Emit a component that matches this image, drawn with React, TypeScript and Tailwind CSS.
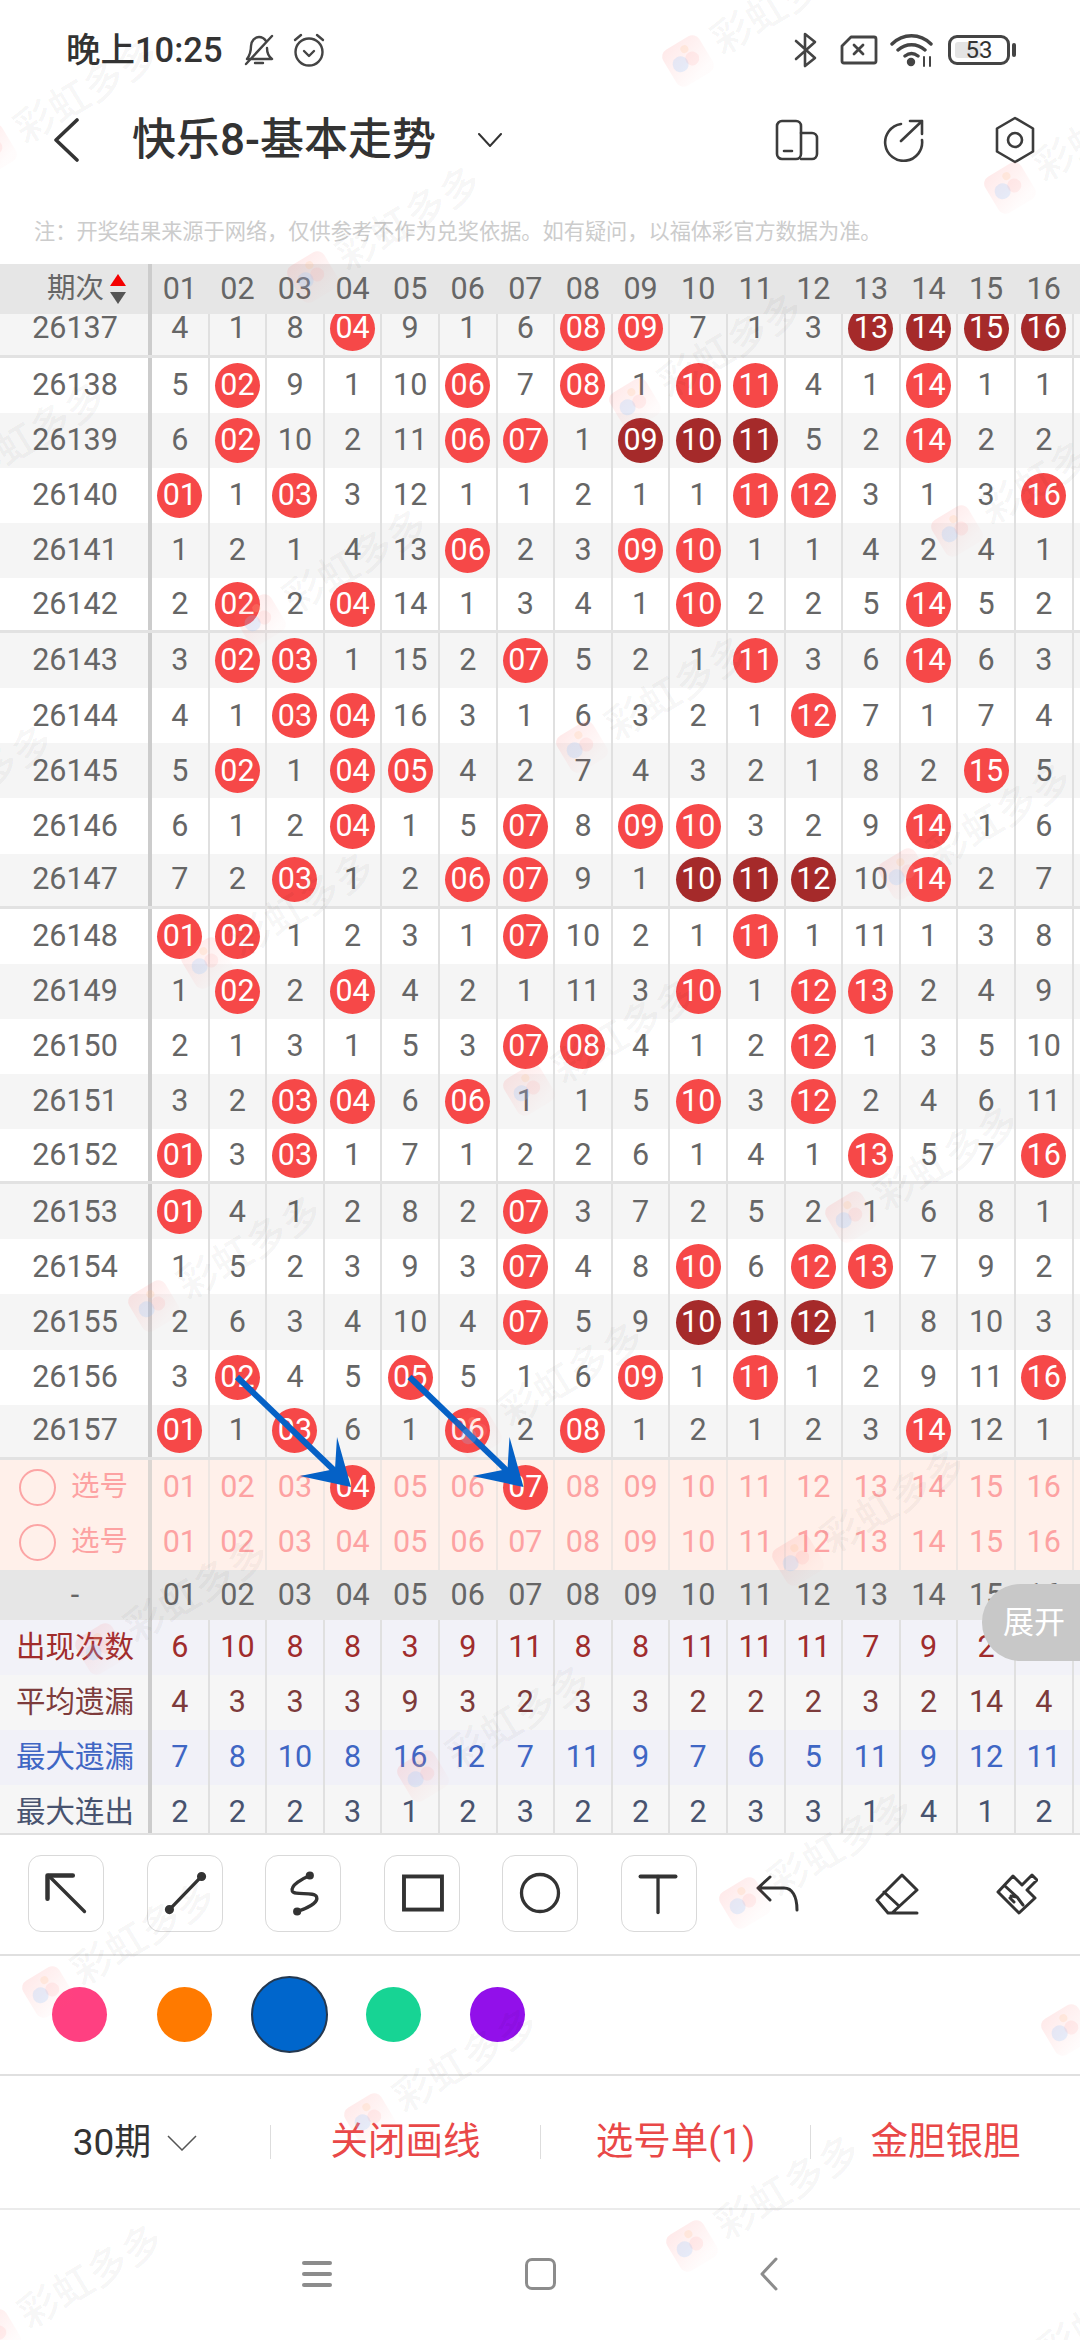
const ROWS: [string, string][] = [
  ["26137", "4 1 8 r04 9 1 6 r08 r09 7 1 3 d13 d14 d15 d16"],
  ["26138", "5 r02 9 1 10 r06 7 r08 1 r10 r11 4 1 r14 1 1"],
  ["26139", "6 r02 10 2 11 r06 r07 1 d09 d10 d11 5 2 r14 2 2"],
  ["26140", "r01 1 r03 3 12 1 1 2 1 1 r11 r12 3 1 3 r16"],
  ["26141", "1 2 1 4 13 r06 2 3 r09 r10 1 1 4 2 4 1"],
  ["26142", "2 r02 2 r04 14 1 3 4 1 r10 2 2 5 r14 5 2"],
  ["26143", "3 r02 r03 1 15 2 r07 5 2 1 r11 3 6 r14 6 3"],
  ["26144", "4 1 r03 r04 16 3 1 6 3 2 1 r12 7 1 7 4"],
  ["26145", "5 r02 1 r04 r05 4 2 7 4 3 2 1 8 2 r15 5"],
  ["26146", "6 1 2 r04 1 5 r07 8 r09 r10 3 2 9 r14 1 6"],
  ["26147", "7 2 r03 1 2 r06 r07 9 1 d10 d11 d12 10 r14 2 7"],
  ["26148", "r01 r02 1 2 3 1 r07 10 2 1 r11 1 11 1 3 8"],
  ["26149", "1 r02 2 r04 4 2 1 11 3 r10 1 r12 r13 2 4 9"],
  ["26150", "2 1 3 1 5 3 r07 r08 4 1 2 r12 1 3 5 10"],
  ["26151", "3 2 r03 r04 6 r06 1 1 5 r10 3 r12 2 4 6 11"],
  ["26152", "r01 3 r03 1 7 1 2 2 6 1 4 1 r13 5 7 r16"],
  ["26153", "r01 4 1 2 8 2 r07 3 7 2 5 2 1 6 8 1"],
  ["26154", "1 5 2 3 9 3 r07 4 8 r10 6 r12 r13 7 9 2"],
  ["26155", "2 6 3 4 10 4 r07 5 9 d10 d11 d12 1 8 10 3"],
  ["26156", "3 r02 4 5 r05 5 1 6 r09 1 r11 1 2 9 11 r16"],
  ["26157", "r01 1 r03 6 1 r06 2 r08 1 2 1 2 3 r14 12 1"],
];

const NUMS = ["01", "02", "03", "04", "05", "06", "07", "08", "09", "10", "11", "12", "13", "14", "15", "16"];

const STATS = [
  { label: "出现次数", text: "text-[#a02c2c]", bg: "bg-[#f2f2f8]", vals: "6 10 8 8 3 9 11 8 8 11 11 11 7 9 2 6" },
  { label: "平均遗漏", text: "text-[#7d3b3b]", bg: "bg-[#f6f6f6]", vals: "4 3 3 3 9 3 2 3 3 2 2 2 3 2 14 4" },
  { label: "最大遗漏", text: "text-[#3f66c4]", bg: "bg-[#f1f1f8]", vals: "7 8 10 8 16 12 7 11 9 7 6 5 11 9 12 11" },
  { label: "最大连出", text: "text-[#48536f]", bg: "bg-[#f6f6f6]", vals: "2 2 2 3 1 2 3 2 2 2 3 3 1 4 1 2" },
];

function Ball({ n, dark }: { n: string; dark?: boolean }) {
  return (
    <span className={`flex h-[45px] w-[45px] items-center justify-center rounded-full text-white ${dark ? "bg-[#a52a2a]" : "bg-[#f64848]"}`}>
      {n}
    </span>
  );
}

function DrawRow({ id, cells, index }: { id: string; cells: string; index: number }) {
  const lined = index % 5 === 0;
  return (
    <div className={`box-border flex h-[55.12px] text-[#666] ${index % 2 === 0 ? "bg-[#f5f5f5]" : "bg-white"} ${lined ? "border-b-[3px] border-[#e2e2e2]" : ""}`}>
      <div className="flex w-[152px] shrink-0 items-center justify-center border-r-4 border-[#cccccc] pl-[2px]">{id}</div>
      {cells.split(" ").map((c, i) => (
        <div key={i} className="flex w-[57.6px] shrink-0 items-center justify-center border-r-2 border-[#e0e0e0]">
          {c[0] === "r" ? <Ball n={c.slice(1)} /> : c[0] === "d" ? <Ball n={c.slice(1)} dark /> : c}
        </div>
      ))}
    </div>
  );
}

function PickRow({ hit }: { hit: string[] }) {
  return (
    <div className="flex h-[55px] bg-[#fff0ea] text-[#fda2a2]">
      <div className="flex w-[152px] shrink-0 items-center border-r-4 border-[#dcd6d2] pl-[19px]">
        <span className="h-[37px] w-[37px] rounded-full border-2 border-[#fca5a5]" />
        <span className="ml-[15px] text-[28.500px]">选号</span>
      </div>
      {NUMS.map((n) => (
        <div key={n} className="flex w-[57.6px] shrink-0 items-center justify-center border-r-2 border-[#eee6e2]">
          {hit.includes(n) ? <Ball n={n} /> : n}
        </div>
      ))}
    </div>
  );
}

function Watermark({ x, y }: { x: number; y: number }) {
  return (
    <div className="absolute flex origin-[22px_22px] rotate-[-31deg] items-center whitespace-nowrap" style={{ left: x - 22, top: y - 22 }}>
      <svg width="44" height="44" viewBox="0 0 44 44">
        <defs>
          <linearGradient id="wm-fade" x1="0" y1="0" x2="0.3" y2="1">
            <stop offset="0" stopColor="#ff5a5a" stopOpacity="0.13" />
            <stop offset="1" stopColor="#ff5a5a" stopOpacity="0.02" />
          </linearGradient>
        </defs>
        <rect x="1" y="1" width="42" height="42" rx="8" fill="url(#wm-fade)" />
        <circle cx="14" cy="21" r="8" fill="#8ec5ff" opacity="0.22" />
        <circle cx="27" cy="22" r="7" fill="#ff9a9a" opacity="0.14" />
        <circle cx="25" cy="10" r="4" fill="#ffc48a" opacity="0.2" />
      </svg>
      <span className="ml-[10px] text-[40px] font-medium leading-none text-black/[0.05]">彩虹多多</span>
    </div>
  );
}

function Watermarks() {
  const marks: { x: number; y: number }[] = [];
  for (let a = -10; a < 14; a++) {
    for (let b = -12; b < 10; b++) {
      const x = 313 + a * 322 + b * 375;
      const y = 277 + a * 127 - b * 216;
      if (x > -160 && x < 1100 && y > -40 && y < 2420) marks.push({ x, y });
    }
  }
  return (
    <div className="pointer-events-none absolute inset-0 overflow-hidden">
      {marks.map((m) => (
        <Watermark key={`${m.x}-${m.y}`} x={m.x} y={m.y} />
      ))}
    </div>
  );
}

function DrawnArrows() {
  return (
    <svg className="pointer-events-none absolute left-0 top-0" width="1080" height="1600" viewBox="0 0 1080 1600">
      {[0, 172.5].map((dx) => (
        <g key={dx} transform={`translate(${dx} 0)`} fill="#0561c6">
          <line x1="237" y1="1377" x2="340" y2="1476" stroke="#0561c6" strokeWidth="6" />
          <polygon points="351,1487 337,1437 335,1469 300,1476" />
        </g>
      ))}
    </svg>
  );
}

function StatusBar() {
  const s = { fill: "none", stroke: "#444", strokeWidth: 2.4, strokeLinecap: "round" as const, strokeLinejoin: "round" as const };
  return (
    <div className="flex h-[100px] items-center pl-[66px] pr-[64px] text-[#333]">
      <span className="text-[34.500px] font-medium leading-none">晚上10:25</span>
      <svg className="ml-[20px]" width="32" height="34" viewBox="0 0 32 34" {...s}>
        <path d="M4 26c3-4 4-8 4-13 0-5 4-9 8-9 3 0 5 1 7 4M24 15c0 5 1 8 5 11H4M12 30h8M3 31 29 3" />
      </svg>
      <svg className="ml-[17px]" width="34" height="36" viewBox="0 0 34 36" {...s}>
        <circle cx="17" cy="20" r="13.5" />
        <path d="m12 19 5 5 5-5M3 8l6-5M31 8l-6-5" />
      </svg>
      <svg className="ml-auto" width="24" height="36" viewBox="0 0 24 36" {...s} strokeWidth={2.6}>
        <path d="M2 9 21 26 11 34V2l10 8L2 27" />
      </svg>
      <svg className="ml-[22px]" width="38" height="30" viewBox="0 0 38 30" {...s} strokeWidth={2.8}>
        <path d="M11 2h23a2 2 0 0 1 2 2v22a2 2 0 0 1-2 2H4a2 2 0 0 1-2-2V11z" />
        <path d="m14 10 9 9M23 10l-9 9" />
      </svg>
      <svg className="ml-[12px]" width="44" height="34" viewBox="0 0 44 34" {...s} strokeWidth={3.4}>
        <path d="M2 11c11-11 28-11 39 0M8 17c8-7 19-7 27 0M15 23c4-3 9-3 13 0" />
        <circle cx="21" cy="29" r="2.5" fill="#444" />
        <path d="M34 24v9M40 24v9" strokeWidth={2} />
      </svg>
      <div className="relative ml-[14px] flex h-[30px] w-[62px] items-center justify-center rounded-[9px] border-[3px] border-[#444] text-[24px] leading-none">
        <span className="absolute bottom-[4px] left-[4px] top-[4px] w-[26px] rounded-[3px] bg-[#e4e4e4]" />
        <span className="relative">53</span>
      </div>
      <span className="ml-[2px] h-[14px] w-[4px] rounded-full bg-[#444]" />
    </div>
  );
}

function NavBar() {
  const s = { fill: "none", stroke: "#3c3c3c", strokeWidth: 2.6, strokeLinecap: "round" as const, strokeLinejoin: "round" as const };
  return (
    <div className="flex h-[80px] items-center pl-[53px] pr-[44px]">
      <svg width="26" height="44" viewBox="0 0 26 44" fill="none" stroke="#333" strokeWidth="3.6" strokeLinecap="round" strokeLinejoin="round">
        <path d="M24 2 3 22l21 20" />
      </svg>
      <span className="ml-[53px] text-[44px] font-medium leading-none text-[#333]">快乐8-基本走势</span>
      <svg className="ml-[42px]" width="24" height="14" viewBox="0 0 24 14" fill="none" stroke="#333" strokeWidth="2" strokeLinecap="round">
        <path d="m1 1 11 12L23 1" />
      </svg>
      <svg className="ml-auto" width="44" height="42" viewBox="0 0 44 42" {...s}>
        <rect x="2" y="2" width="24" height="38" rx="5" />
        <path d="M26 14h11a5 5 0 0 1 5 5v16a5 5 0 0 1-5 5H26M9 32h8" />
      </svg>
      <svg className="ml-[62px]" width="44" height="44" viewBox="0 0 44 44" {...s}>
        <path d="M20 6a18.500 18.500 0 1 0 21 16M20 23 41 3M29 3h12v13" />
      </svg>
      <svg className="ml-[69px]" width="42" height="48" viewBox="0 0 42 48" {...s}>
        <path d="M21 2 39 12.500v23L21 46 3 35.500v-23z" />
        <circle cx="21" cy="24" r="7" />
      </svg>
    </div>
  );
}

function DrawTool({ children }: { children: React.ReactNode }) {
  return (
    <div className="h-[77px] w-[76px] shrink-0 rounded-[13px] border border-[#d9d9d9]">
      <svg width="74" height="75" viewBox="0 0 76 77" fill="none" stroke="#333" strokeWidth="3.4" strokeLinecap="round" strokeLinejoin="round">
        {children}
      </svg>
    </div>
  );
}

function Toolbar() {
  return (
    <div className="flex h-[121px] items-center border-b-2 border-[#e0e0e0] pb-[2px] pl-[28px]">
      <div className="flex gap-[42.500px]">
        <DrawTool>
          <path d="M20 20 57 57" />
          <path d="M19 44V20h26" strokeWidth="4.6" />
        </DrawTool>
        <DrawTool>
          <path d="M22 55 55 21" />
          <circle cx="22" cy="55" r="3" fill="#333" />
          <circle cx="55" cy="21" r="3" fill="#333" />
        </DrawTool>
        <DrawTool>
          <path d="M45 20C38 23 25 30 27 36c2 5 23 0 25 6 2 6-11 12-20 15" />
          <circle cx="45" cy="20" r="2.500" fill="#333" />
          <circle cx="32" cy="57" r="2.500" fill="#333" />
        </DrawTool>
        <DrawTool>
          <rect x="19.500" y="21" width="39" height="34" strokeWidth="4" strokeLinejoin="miter" />
        </DrawTool>
        <DrawTool>
          <circle cx="38" cy="38" r="19" />
        </DrawTool>
        <DrawTool>
          <path d="M19 21h36" strokeWidth="4" />
          <path d="M37 21v37" />
        </DrawTool>
      </div>
      <svg className="ml-[59px]" width="43" height="37" viewBox="0 0 43 37" fill="none" stroke="#333" strokeWidth="3" strokeLinecap="round" strokeLinejoin="round">
        <path d="M14 2 2 13l12 12M2 13h26c8 0 13 8 13 22" />
      </svg>
      <svg className="ml-[76px]" width="44" height="42" viewBox="0 0 44 42" fill="none" stroke="#333" strokeWidth="3" strokeLinecap="round" strokeLinejoin="round">
        <path d="M27 2 42 17 17 40h-4L2 27zM9 19l15 14M13 40h29" />
      </svg>
      <svg className="ml-[77px]" width="42" height="42" viewBox="0 0 42 42" fill="none" stroke="#333" strokeWidth="3" strokeLinecap="round" strokeLinejoin="round">
        <path d="M17 3 26 12 36 2l5 5-10 10 8 8-16 15L2 19zM9 13l12 11 -6-1M14 25l4 4M21 24l6 8" />
      </svg>
    </div>
  );
}

function ColorRow() {
  return (
    <div className="flex h-[120px] items-center border-b-2 border-[#e0e0e0] pb-[2px] pl-[52px]">
      <span className="h-[55px] w-[55px] rounded-full bg-[#ff4081]" />
      <span className="ml-[50px] h-[55px] w-[55px] rounded-full bg-[#ff7a00]" />
      <span className="ml-[39px] h-[77px] w-[77px] rounded-full border-2 border-[#24384f] bg-[#0066cc]" />
      <span className="ml-[38px] h-[55px] w-[55px] rounded-full bg-[#17d494]" />
      <span className="ml-[49px] h-[55px] w-[55px] rounded-full bg-[#9210ea]" />
    </div>
  );
}

function ActionBar() {
  const link = "flex flex-1 items-center justify-center text-[37.500px] leading-none text-[#e94848]";
  return (
    <div className="flex h-[134px] items-center border-b-2 border-[#ebebeb]">
      <div className="flex w-[270px] items-center justify-center text-[37px] leading-none text-[#333]">
        <span>30期</span>
        <svg className="ml-[16px] mt-[2px]" width="30" height="16" viewBox="0 0 30 16" fill="none" stroke="#555" strokeWidth="1.500">
          <path d="m1 1 14 14L29 1" />
        </svg>
      </div>
      <div className={`${link} h-[34px] border-l border-[#dddddd]`}>关闭画线</div>
      <div className={`${link} h-[34px] border-l border-[#dddddd]`}>选号单(1)</div>
      <div className={`${link} h-[34px] border-l border-[#dddddd]`}>金胆银胆</div>
    </div>
  );
}

function SystemNav() {
  return (
    <div className="flex h-[128px] items-center pl-[302px]">
      <div className="flex w-[30px] flex-col gap-[7px]">
        <span className="h-[4px] rounded-full bg-[#8c8c8c]" />
        <span className="h-[4px] rounded-full bg-[#8c8c8c]" />
        <span className="h-[4px] rounded-full bg-[#8c8c8c]" />
      </div>
      <span className="ml-[193px] h-[32px] w-[31px] rounded-[7px] border-[3.500px] border-[#8c8c8c]" />
      <svg className="ml-[203px]" width="19" height="34" viewBox="0 0 19 34" fill="none" stroke="#8c8c8c" strokeWidth="3" strokeLinecap="round" strokeLinejoin="round">
        <path d="M17 2 3 17l14 15" />
      </svg>
    </div>
  );
}

export default function App() {
  return (
    <div className="relative h-[2340px] w-[1080px] overflow-hidden bg-white [font-family:Roboto,'Noto_Sans_CJK_SC',sans-serif]">
      <StatusBar />
      <NavBar />
      <div className="flex h-[84px] items-center pl-[34px] pt-[20px] text-[21.200px] leading-none text-[#cccccc]">
        注：开奖结果来源于网络，仅供参考不作为兑奖依据。如有疑问，以福体彩官方数据为准。
      </div>

      <div className="text-[30.500px] leading-none">
        <div className="flex h-[50px] bg-[#e6e6e6] text-[#666]">
          <div className="flex w-[152px] shrink-0 items-center justify-end border-r-4 border-[#cccccc] pr-[22px]">
            <span className="text-[28.500px]">期次</span>
            <span className="ml-[6px] flex flex-col items-center gap-[6px]">
              <span className="h-0 w-0 border-x-[8px] border-b-[12px] border-x-transparent border-b-[#f40000]" />
              <span className="h-0 w-0 border-x-[8px] border-t-[12px] border-x-transparent border-t-[#555]" />
            </span>
          </div>
          {NUMS.map((n) => (
            <div key={n} className="flex w-[57.6px] shrink-0 items-center justify-center pr-[2px]">{n}</div>
          ))}
        </div>

        <div className="h-[1146px] overflow-hidden">
          <div className="mt-[-11.500px]">
            {ROWS.map(([id, cells], i) => (
              <DrawRow key={id} id={id} cells={cells} index={i} />
            ))}
          </div>
        </div>

        <PickRow hit={["04", "07"]} />
        <PickRow hit={[]} />

        <div className="flex h-[50px] bg-[#e6e6e6] text-[#666]">
          <div className="flex w-[152px] shrink-0 items-center justify-center border-r-4 border-[#cccccc] pl-[2px]">-</div>
          {NUMS.map((n) => (
            <div key={n} className="flex w-[57.6px] shrink-0 items-center justify-center pr-[2px]">{n}</div>
          ))}
        </div>

        <div className="h-[213px] overflow-hidden">
          {STATS.map((row) => (
            <div key={row.label} className={`flex h-[55px] ${row.bg} ${row.text}`}>
              <div className="flex w-[152px] shrink-0 items-center justify-center border-r-4 border-[#cccccc] pl-[2px] text-[29.500px]">{row.label}</div>
              {row.vals.split(" ").map((v, i) => (
                <div key={i} className="flex w-[57.6px] shrink-0 items-center justify-center border-r-2 border-[#e0e0e0]">{v}</div>
              ))}
            </div>
          ))}
        </div>
      </div>

      <div className="h-[2px] bg-[#e0e0e0]" />
      <Toolbar />
      <ColorRow />
      <ActionBar />
      <SystemNav />

      <DrawnArrows />
      <div className="absolute right-0 top-[1584px] flex h-[77px] w-[98px] items-center justify-center rounded-l-[38px] bg-[#c8c8c8] pl-[6px] text-[31px] leading-none text-white">
        展开
      </div>
      <Watermarks />
    </div>
  );
}
